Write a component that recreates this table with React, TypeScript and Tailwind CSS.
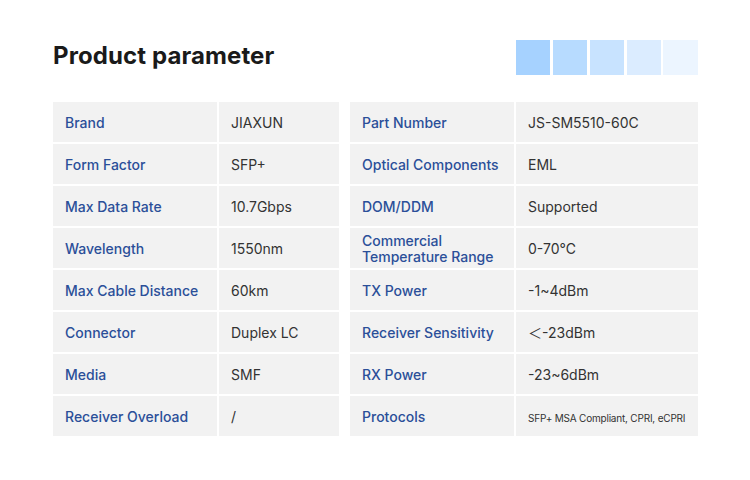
import React from "react";

const left: [string, React.ReactNode][] = [
  ["Brand", "JIAXUN"],
  ["Form Factor", "SFP+"],
  ["Max Data Rate", "10.7Gbps"],
  ["Wavelength", "1550nm"],
  ["Max Cable Distance", "60km"],
  ["Connector", "Duplex LC"],
  ["Media", "SMF"],
  ["Receiver Overload", "/"],
];

const right: [string, React.ReactNode][] = [
  ["Part Number", "JS-SM5510-60C"],
  ["Optical Components", "EML"],
  ["DOM/DDM", "Supported"],
  ["Commercial Temperature Range", "0-70℃"],
  ["TX Power", "-1~4dBm"],
  ["Receiver Sensitivity", "＜-23dBm"],
  ["RX Power", "-23~6dBm"],
  [
    "Protocols",
    <span className="text-[10px] whitespace-nowrap tracking-[-0.2px]">SFP+ MSA Compliant, CPRI, eCPRI</span>,
  ],
];

function Table({ rows, valueW }: { rows: [string, React.ReactNode][]; valueW: string }) {
  return (
    <div className="flex flex-col gap-[2px]">
      {rows.map(([k, v], i) => (
        <div key={i} className="flex gap-[2px] h-[40px]">
          <div className="w-[164px] bg-[#f2f2f2] flex items-center pl-[12px] pr-2 pt-[2px] text-[14px] font-medium text-[#2b4f99]">
            {k === "Commercial Temperature Range" ? (
              <span className="leading-[16px]">
                Commercial
                <br />
                Temperature Range
              </span>
            ) : (
              <span className="leading-[20px]">{k}</span>
            )}
          </div>
          <div className={`${valueW} bg-[#f2f2f2] flex items-center pl-[12px] pt-[2px] text-[14px] text-[#333333]`}>
            <span className="leading-[20px]">{v}</span>
          </div>
        </div>
      ))}
    </div>
  );
}

export default function App() {
  return (
    <div
      className="w-[750px] h-[480px] bg-white"
      style={{ fontFamily: "Inter, 'Noto Sans', 'Noto Sans CJK SC', sans-serif" }}
    >
      <div className="pt-[40px] pl-[53px] pr-[52px]">
        <div className="flex justify-between items-start h-[62px]">
          <h1 className="text-[24px] font-bold text-[#1a1a1a] leading-[32px] tracking-[0.1px]">
            Product parameter
          </h1>
          <div className="flex">
            <div className="w-[34px] h-[35px] bg-[#a6d2ff]" />
            <div className="w-[34px] h-[35px] bg-[#b7dbff] ml-[3px]" />
            <div className="w-[34px] h-[35px] bg-[#c8e3ff] ml-[3px]" />
            <div className="w-[34px] h-[35px] bg-[#dbecff] ml-[3px]" />
            <div className="w-[35px] h-[35px] bg-[#ecf5ff] ml-[2px]" />
          </div>
        </div>
        <div className="flex gap-[11px]">
          <Table rows={left} valueW="w-[120px]" />
          <Table rows={right} valueW="w-[182px]" />
        </div>
      </div>
    </div>
  );
}
